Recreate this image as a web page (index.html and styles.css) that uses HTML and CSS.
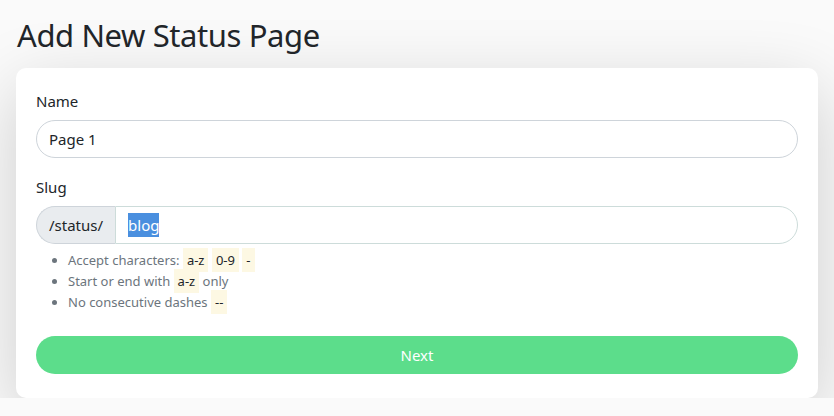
FILE: index.html
```html
<!DOCTYPE html>
<html lang="en">
<head>
    <meta charset="UTF-8">
    <meta name="viewport" content="width=device-width, initial-scale=1.0">
    <title>Add New Status Page</title>
    <link rel="stylesheet" href="styles.css">
</head>
<body>
    <div class="container">
        <h1 class="title">Add New Status Page</h1>

        <!-- Form card -->
        <div class="shadow-box">
            <div class="field">
                <label class="form-label" for="name">Name</label>
                <div class="form-control">Page 1</div>
            </div>

            <div class="field">
                <label class="form-label" for="slug">Slug</label>
                <div class="input-group">
                    <span class="input-group-text">/status/</span>
                    <div class="form-control slug"><span class="selected">blog</span></div>
                </div>
                <ul class="form-text">
                    <li>Accept characters: <code>a-z</code> <code>0-9</code> <code>-</code></li>
                    <li>Start or end with <code>a-z</code> only</li>
                    <li>No consecutive dashes <code>--</code></li>
                </ul>
            </div>

            <button class="btn-next">Next</button>
        </div>
    </div>
</body>
</html>
```

FILE: styles.css
```css
/* General styles */
body {
    font-family: "Noto Sans", "Open Sans", sans-serif;
    background-color: #fafafa;
    color: #212529;
    margin: 0;
    padding: 0;
}
.container {
    padding: 16px 16px 0 16px;
}
.title {
    font-size: 31px;
    font-weight: 400;
    letter-spacing: -0.4px;
    margin: 0 0 14px 1px;
    line-height: 38px;
}

/* Card */
.shadow-box {
    background: #fff;
    border-radius: 10px;
    padding: 21px 20px 24px 20px;
    box-shadow: 0 20px 70px rgba(0, 0, 0, 0.18);
}
.field {
    margin-bottom: 17px;
}
.form-label {
    display: block;
    font-size: 15px;
    line-height: 24px;
    margin-bottom: 7px;
}
.form-control {
    height: 36px;
    border: 1px solid #ced4da;
    border-radius: 50rem;
    padding: 0 12px;
    font-size: 15px;
    line-height: 36px;
    color: #212529;
}

/* Slug input group */
.input-group {
    display: flex;
}
.input-group-text {
    background-color: #e9ecef;
    border: 1px solid #ced4da;
    border-right: none;
    border-radius: 50rem 0 0 50rem;
    padding: 0 12px;
    font-size: 15px;
    line-height: 36px;
}
.form-control.slug {
    flex: 1;
    border-color: #cddcda;
    border-radius: 0 50rem 50rem 0;
}
.selected {
    background-color: #4a8fdf;
    color: #fff;
    padding: 2px 0;
}
.form-text {
    margin: 6px 0 0 0;
    padding-left: 32px;
    font-size: 13px;
    line-height: 21px;
    color: #6c757d;
}
.form-text code {
    font-family: inherit;
    font-size: 13px;
    color: #212529;
    background-color: #fdf8e3;
    padding: 3px 4px;
}

/* Button */
.btn-next {
    display: block;
    width: 100%;
    margin-top: 23px;
    height: 38px;
    border: none;
    border-radius: 50rem;
    background-color: #5cdd8b;
    color: #fff;
    font-family: inherit;
    font-size: 15px;
}
```
